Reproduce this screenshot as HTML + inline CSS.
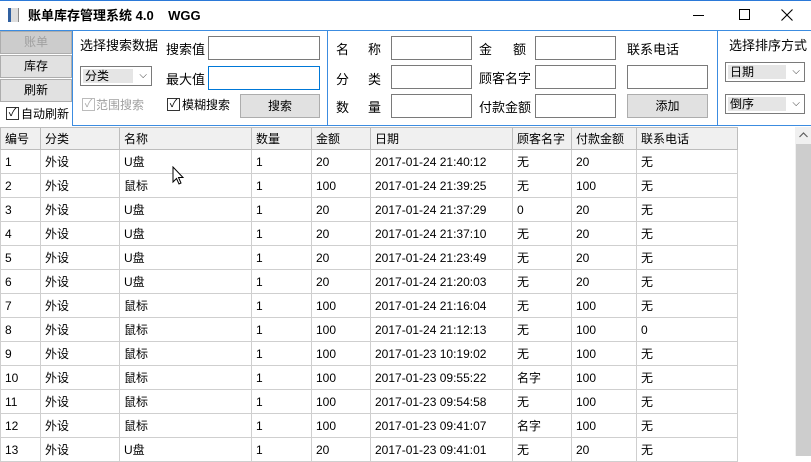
<!DOCTYPE html>
<html><head><meta charset="utf-8"><style>
*{box-sizing:border-box;margin:0;padding:0}
body{width:811px;height:456px;overflow:hidden;background:#fff;font-family:"Liberation Sans","Noto Sans CJK SC",sans-serif;font-size:12px;color:#000;position:relative}
.a{position:absolute;white-space:nowrap}
.inp{position:absolute;background:#fff;border:1px solid #7a7a7a}
.btn{position:absolute;background:#e1e1e1;border:1px solid #adadad;text-align:center}
.sel{position:absolute;background:#fff;border:1px solid #7a7a7a}
.sel span{position:absolute;left:2px;top:2px;bottom:2px;right:18px;background:#e5e5e5;padding-left:2px;line-height:15px}
.sel i{position:absolute;right:4px;top:0;font-style:normal;font-size:10px;color:#333;line-height:18px}
.cb{position:absolute;width:13px;height:13px;border:1px solid #333;background:#fff;font-size:11px;line-height:11px;text-align:center}
table{position:absolute;left:0;top:127px;border-collapse:collapse;table-layout:fixed}
td,th{border:1px solid #cfcfcf;height:24px;padding-left:4px;text-align:left;font-weight:normal;overflow:hidden;white-space:nowrap}
th{background:#f0f0f0;height:22px;border-color:#bdbdbd}
</style></head><body>
<div class="a" style="left:0;top:0;width:811px;height:1px;background:#2b79d8"></div>
<div class="a" style="left:8px;top:8px;width:11px;height:14px;background:linear-gradient(90deg,#3060a0 0 3px,#ddd 3px 10px,#888 10px)"></div>
<div class="a" style="left:28px;top:5px;font-size:13px;font-weight:bold">账单库存管理系统 4.0&nbsp;&nbsp;&nbsp; WGG</div>
<div class="a" style="left:693px;top:15px;width:11px;height:1px;background:#000"></div>
<div class="a" style="left:739px;top:9px;width:11px;height:11px;border:1px solid #000"></div>
<svg class="a" style="left:781px;top:9px" width="12" height="12"><path d="M0.5 0.5L11.5 11.5M11.5 0.5L0.5 11.5" stroke="#000" stroke-width="1.1"/></svg>
<div class="a" style="left:0;top:30px;width:811px;height:1px;background:#3c8ce0"></div>
<div class="a" style="left:72px;top:31px;width:1px;height:95px;background:#3c8ce0"></div>
<div class="a" style="left:327px;top:31px;width:1px;height:95px;background:#3c8ce0"></div>
<div class="a" style="left:717px;top:31px;width:1px;height:95px;background:#3c8ce0"></div>
<div class="a" style="left:72px;top:125px;width:739px;height:1px;background:#3c8ce0"></div>
<div class="btn" style="left:0;top:31px;width:72px;height:23px;line-height:21px;color:#a0a0a0;background:#ccc">账单</div>
<div class="btn" style="left:0;top:55px;width:72px;height:23px;line-height:21px">库存</div>
<div class="btn" style="left:0;top:79px;width:72px;height:23px;line-height:21px">刷新</div>
<div class="cb" style="left:6px;top:107px">✓</div><div class="a" style="left:21px;top:105px">自动刷新</div>
<div class="a" style="left:80px;top:35px;font-size:13px">选择搜索数据</div>
<div class="sel" style="left:80px;top:66px;width:72px;height:20px"><span>分类</span><i>⌵</i></div>
<div class="cb" style="left:82px;top:98px;border-color:#bbb;color:#aaa">✓</div><div class="a" style="left:96px;top:96px;color:#a0a0a0">范围搜索</div>
<div class="a" style="left:166px;top:39px;font-size:13px">搜索值</div>
<div class="inp" style="left:208px;top:36px;width:112px;height:24px"></div>
<div class="a" style="left:166px;top:69px;font-size:13px">最大值</div>
<div class="inp" style="left:208px;top:66px;width:112px;height:24px;border-color:#0078d7"></div>
<div class="cb" style="left:167px;top:98px">✓</div><div class="a" style="left:182px;top:96px">模糊搜索</div>
<div class="btn" style="left:240px;top:94px;width:80px;height:24px;line-height:22px">搜索</div>
<div class="a" style="left:336px;top:39px;font-size:13px">名</div><div class="a" style="left:368px;top:39px;font-size:13px">称</div>
<div class="a" style="left:336px;top:69px;font-size:13px">分</div><div class="a" style="left:368px;top:69px;font-size:13px">类</div>
<div class="a" style="left:336px;top:97px;font-size:13px">数</div><div class="a" style="left:368px;top:97px;font-size:13px">量</div>
<div class="inp" style="left:391px;top:36px;width:81px;height:24px"></div>
<div class="inp" style="left:391px;top:65px;width:81px;height:24px"></div>
<div class="inp" style="left:391px;top:94px;width:81px;height:24px"></div>
<div class="a" style="left:479px;top:39px;font-size:13px">金</div><div class="a" style="left:513px;top:39px;font-size:13px">额</div>
<div class="a" style="left:479px;top:68px;font-size:13px">顾客名字</div>
<div class="a" style="left:479px;top:97px;font-size:13px">付款金额</div>
<div class="inp" style="left:535px;top:36px;width:81px;height:24px"></div>
<div class="inp" style="left:535px;top:65px;width:81px;height:24px"></div>
<div class="inp" style="left:535px;top:94px;width:81px;height:24px"></div>
<div class="a" style="left:627px;top:39px;font-size:13px">联系电话</div>
<div class="inp" style="left:627px;top:65px;width:81px;height:24px"></div>
<div class="btn" style="left:627px;top:94px;width:81px;height:24px;line-height:22px">添加</div>
<div class="a" style="left:729px;top:35px;font-size:13px">选择排序方式</div>
<div class="sel" style="left:725px;top:62px;width:80px;height:20px"><span>日期</span><i>⌵</i></div>
<div class="sel" style="left:725px;top:94px;width:80px;height:20px"><span>倒序</span><i>⌵</i></div>
<table>
<colgroup><col style="width:40px"><col style="width:79px"><col style="width:132px"><col style="width:60px"><col style="width:59px"><col style="width:142px"><col style="width:59px"><col style="width:65px"><col style="width:101px"></colgroup>
<tr><th>编号</th><th>分类</th><th>名称</th><th>数量</th><th>金额</th><th>日期</th><th>顾客名字</th><th>付款金额</th><th>联系电话</th></tr>
<tr><td>1</td><td>外设</td><td>U盘</td><td>1</td><td>20</td><td>2017-01-24 21:40:12</td><td>无</td><td>20</td><td>无</td></tr>
<tr><td>2</td><td>外设</td><td>鼠标</td><td>1</td><td>100</td><td>2017-01-24 21:39:25</td><td>无</td><td>100</td><td>无</td></tr>
<tr><td>3</td><td>外设</td><td>U盘</td><td>1</td><td>20</td><td>2017-01-24 21:37:29</td><td>0</td><td>20</td><td>无</td></tr>
<tr><td>4</td><td>外设</td><td>U盘</td><td>1</td><td>20</td><td>2017-01-24 21:37:10</td><td>无</td><td>20</td><td>无</td></tr>
<tr><td>5</td><td>外设</td><td>U盘</td><td>1</td><td>20</td><td>2017-01-24 21:23:49</td><td>无</td><td>20</td><td>无</td></tr>
<tr><td>6</td><td>外设</td><td>U盘</td><td>1</td><td>20</td><td>2017-01-24 21:20:03</td><td>无</td><td>20</td><td>无</td></tr>
<tr><td>7</td><td>外设</td><td>鼠标</td><td>1</td><td>100</td><td>2017-01-24 21:16:04</td><td>无</td><td>100</td><td>无</td></tr>
<tr><td>8</td><td>外设</td><td>鼠标</td><td>1</td><td>100</td><td>2017-01-24 21:12:13</td><td>无</td><td>100</td><td>0</td></tr>
<tr><td>9</td><td>外设</td><td>鼠标</td><td>1</td><td>100</td><td>2017-01-23 10:19:02</td><td>无</td><td>100</td><td>无</td></tr>
<tr><td>10</td><td>外设</td><td>鼠标</td><td>1</td><td>100</td><td>2017-01-23 09:55:22</td><td>名字</td><td>100</td><td>无</td></tr>
<tr><td>11</td><td>外设</td><td>鼠标</td><td>1</td><td>100</td><td>2017-01-23 09:54:58</td><td>无</td><td>100</td><td>无</td></tr>
<tr><td>12</td><td>外设</td><td>鼠标</td><td>1</td><td>100</td><td>2017-01-23 09:41:07</td><td>名字</td><td>100</td><td>无</td></tr>
<tr><td>13</td><td>外设</td><td>U盘</td><td>1</td><td>20</td><td>2017-01-23 09:41:01</td><td>无</td><td>20</td><td>无</td></tr>
</table>
<div class="a" style="left:795px;top:127px;width:16px;height:329px;background:#f0f0f0"></div>
<div class="a" style="left:796px;top:144px;width:15px;height:312px;background:#cdcdcd"></div>
<svg class="a" style="left:799px;top:132px" width="9" height="6"><path d="M0.5 5L4.5 1L8.5 5" fill="none" stroke="#606060" stroke-width="1.2"/></svg>
<svg class="a" style="left:172px;top:166px" width="14" height="20" viewBox="0 0 14 20"><path d="M1 1 L1 16 L4.5 12.5 L7 18 L9 17 L6.5 11.5 L11 11.5 Z" fill="#fff" stroke="#000" stroke-width="1"/></svg>
</body></html>
